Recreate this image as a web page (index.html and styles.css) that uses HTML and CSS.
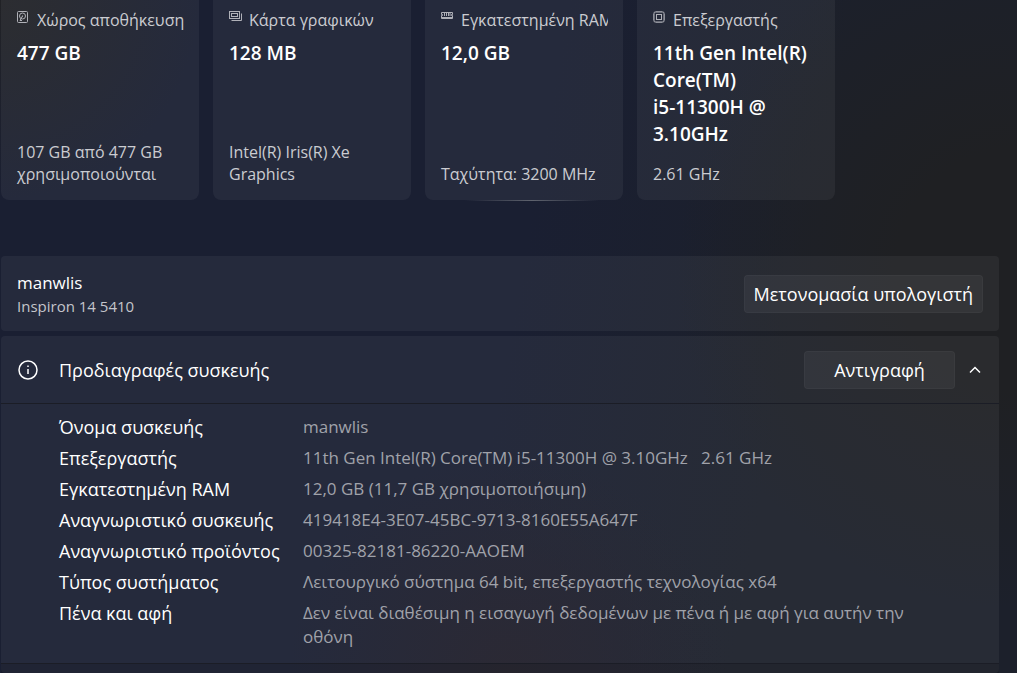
FILE: index.html
```html
<!DOCTYPE html>
<html lang="el">

<head>
    <meta charset="UTF-8">
    <title>Πληροφορίες συστήματος</title>
    <link rel="stylesheet" href="styles.css">
</head>

<body>

    <section class="cards">
        <article class="card">
            <h3>
                <svg class="icon" viewBox="0 0 13 14">
                    <rect x=".5" y="1.500" width="10" height="11" rx="1" />
                    <circle cx="5.500" cy="6" r="3" />
                    <path d="M5.500 6L3 10.500H5M5.500 5.500v1" />
                </svg>
                <span>Χώρος αποθήκευσης</span>
            </h3>
            <p class="value">477 GB</p>
            <p class="info">107 GB από 477 GB χρησιμοποιούνται</p>
        </article>

        <article class="card">
            <h3>
                <svg class="icon" viewBox="0 0 13 14">
                    <rect x=".5" y="1.500" width="10" height="7" />
                    <rect x="2.500" y="3.500" width="6" height="3" />
                    <path d="M2.500 10.500h10v-7" />
                </svg>
                <span>Κάρτα γραφικών</span>
            </h3>
            <p class="value">128 MB</p>
            <p class="info">Intel(R) Iris(R) Xe Graphics</p>
        </article>

        <article class="card card-lit">
            <h3>
                <svg class="icon" viewBox="0 0 13 14">
                    <path d="M.5 2.500h11v2h-1v1h1v3H.5v-3h1v-1h-1zM3.500 3v3M5.500 3v3M7.500 3v3M9 3v3M1 7.500h10" />
                </svg>
                <span>Εγκατεστημένη RAM</span>
            </h3>
            <p class="value">12,0 GB</p>
            <p class="info">Ταχύτητα: 3200 MHz</p>
        </article>

        <article class="card">
            <h3>
                <svg class="icon" viewBox="0 0 13 14">
                    <rect x="1" y="2" width="10" height="10" rx="1" />
                    <rect x="3.500" y="4.500" width="5" height="5" />
                    <path d="M4 1v1M6 1v1M8 1v1M4 12v1M6 12v1M8 12v1M0 5h1M0 7h1M0 9h1M11 5h1M11 7h1M11 9h1" />
                </svg>
                <span>Επεξεργαστής</span>
            </h3>
            <p class="value">11th Gen Intel(R) Core(TM)<br>i5-11300H @ 3.10GHz</p>
            <p class="info">2.61 GHz</p>
        </article>
    </section>

    <main>
        <section class="panel computer">
            <div>
                <h1>manwlis</h1>
                <p class="model">Inspiron 14 5410</p>
            </div>
            <button class="rename">Μετονομασία υπολογιστή</button>
        </section>

        <section class="panel specs">
            <header>
                <svg class="info-icon" viewBox="0 0 20 20">
                    <circle cx="10" cy="10" r="9" />
                    <path d="M10 9v5M10 5.500v1.500" />
                </svg>
                <h2>Προδιαγραφές συσκευής</h2>
                <button class="copy">Αντιγραφή</button>
                <button class="toggle" aria-label="Σύμπτυξη" aria-expanded="true">
                    <svg viewBox="0 0 12 8">
                        <path d="M1 6.500L6 1.500L11 6.500" />
                    </svg>
                </button>
            </header>

            <table>
                <tr>
                    <th>Όνομα συσκευής</th>
                    <td>manwlis</td>
                </tr>
                <tr>
                    <th>Επεξεργαστής</th>
                    <td>11th Gen Intel(R) Core(TM) i5-11300H @ 3.10GHz &nbsp; 2.61 GHz</td>
                </tr>
                <tr>
                    <th>Εγκατεστημένη RAM</th>
                    <td>12,0 GB (11,7 GB χρησιμοποιήσιμη)</td>
                </tr>
                <tr>
                    <th>Αναγνωριστικό συσκευής</th>
                    <td>419418E4-3E07-45BC-9713-8160E55A647F</td>
                </tr>
                <tr>
                    <th>Αναγνωριστικό προϊόντος</th>
                    <td>00325-82181-86220-AAOEM</td>
                </tr>
                <tr>
                    <th>Τύπος συστήματος</th>
                    <td>Λειτουργικό σύστημα 64 bit, επεξεργαστής τεχνολογίας x64</td>
                </tr>
                <tr>
                    <th>Πένα και αφή</th>
                    <td>Δεν είναι διαθέσιμη η εισαγωγή δεδομένων με πένα ή με αφή για αυτήν την οθόνη</td>
                </tr>
            </table>
            <footer></footer>
        </section>
    </main>

</body>

</html>
```
FILE: styles.css
```css
* {
    box-sizing: border-box;
}

body {
    margin: 0;
    padding: 0 18px 0 1px;
    min-height: 100vh;
    overflow: hidden;
    font-family: "Open Sans", "Noto Sans", sans-serif;
    font-size: 17px;
    line-height: 24px;
    color: #fff;
    background:
        radial-gradient(circle at 0 0, #212226, transparent 200px),
        radial-gradient(circle at 50% 100%, #201e2a, transparent 220px),
        radial-gradient(circle at 100% 40%, #1f2023 120px, transparent 340px),
        linear-gradient(100deg, #1a1f32 50%, #1c202b 75%);
}

h1,
h2,
h3,
p {
    margin: 0;
    font-weight: normal;
}

svg {
    fill: none;
    stroke: currentColor;
}

.cards {
    display: grid;
    grid-template-columns: repeat(4, 198px);
    grid-gap: 14px;
    height: 200px;
}

.card {
    position: relative;
    display: flex;
    flex-direction: column;
    padding: 9px 15px 15px 16px;
    border-radius: 0 0 8px 8px;
    background-color: rgba(255, 255, 255, 0.05);
}

.card h3 {
    display: flex;
    gap: 7px;
    font-size: 16px;
    line-height: 22px;
    color: #cbccd1;
}

.card h3 span {
    flex: 1;
    overflow: hidden;
    white-space: nowrap;
}

.icon {
    width: 13px;
    height: 14px;
    margin-top: 1px;
    color: #b0b1b8;
}

.value {
    margin-top: 9px;
    font-size: 19px;
    font-weight: 600;
    line-height: 27px;
}

.info {
    margin-top: auto;
    font-size: 16px;
    line-height: 22px;
    color: #cbccd1;
}

.card-lit::after {
    content: "";
    position: absolute;
    left: 40px;
    right: 24px;
    bottom: -1px;
    height: 1px;
    background: linear-gradient(90deg, transparent, #5f636e, transparent);
}

main {
    display: flex;
    flex-direction: column;
    gap: 5px;
    margin-top: 56px;
}

.panel {
    border-radius: 4px;
    background-color: rgba(255, 255, 255, 0.05);
}

.computer {
    display: flex;
    align-items: center;
    justify-content: space-between;
    padding: 14px 16px;
    min-height: 75px;
}

h1 {
    font-size: 17px;
}

.model {
    font-size: 15px;
    line-height: 22px;
    color: #c4c5cb;
}

button {
    height: 38px;
    padding: 0 9px;
    border: 1px solid rgba(255, 255, 255, 0.03);
    border-radius: 4px;
    font: inherit;
    font-size: 18px;
    color: #fff;
    background-color: rgba(255, 255, 255, 0.05);
}

.copy {
    width: 151px;
}

.specs header {
    display: flex;
    align-items: center;
    height: 68px;
    padding: 0 16px 0 17px;
    border-bottom: 1px solid #1b1d26;
}

.info-icon {
    width: 20px;
    height: 20px;
    stroke-width: 1.5;
}

h2 {
    flex: 1;
    margin-left: 21px;
    font-size: 18px;
}

.toggle {
    display: flex;
    align-items: center;
    justify-content: center;
    width: 16px;
    margin-left: 12px;
    padding: 0;
    border: none;
    background: none;
}

.toggle svg {
    width: 12px;
    height: 8px;
    stroke-width: 1.5;
}

table {
    width: 100%;
    padding: 11px 16px 7px 58px;
    border-spacing: 0;
}

th,
td {
    padding: 0 0 7px;
    vertical-align: top;
    text-align: left;
    font-weight: normal;
}

th {
    width: 244px;
    font-size: 18px;
    white-space: nowrap;
}

td {
    padding-right: 40px;
    color: #a0a2aa;
}

footer {
    height: 10px;
    border-top: 1px solid #1b1d26;
    background-color: rgba(0, 0, 0, 0.12);
}
```
